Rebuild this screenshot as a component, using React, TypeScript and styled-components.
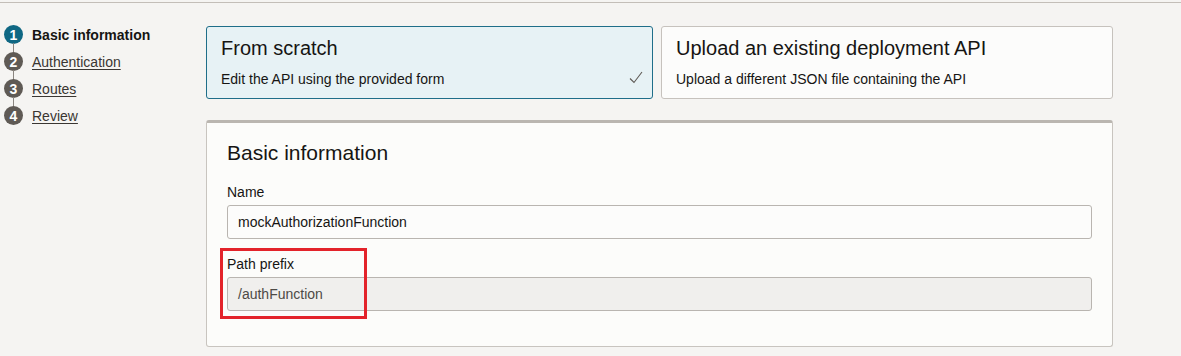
import React from "react";
import styled, { createGlobalStyle } from "styled-components";

const GlobalStyle = createGlobalStyle`
  html, body {
    margin: 0;
    padding: 0;
    background: #f5f4f2;
    font-family: "Liberation Sans", Arial, sans-serif;
    color: #161513;
  }
  * { box-sizing: border-box; }
`;

const TopRule = styled.div`
  height: 3px;
  border-bottom: 1px solid #c3beb8;
`;

const Main = styled.div`
  display: flex;
  align-items: flex-start;
`;

const Sidebar = styled.nav`
  width: 206px;
  flex: none;
  padding: 18px 0 0 4px;
  display: flex;
  flex-direction: column;
`;

const Step = styled.div<{ $last?: boolean }>`
  position: relative;
  display: flex;
  align-items: center;
  gap: 9px;
  height: 27px;
  &::after {
    content: "";
    display: ${(p) => (p.$last ? "none" : "block")};
    position: absolute;
    left: 9px;
    top: 22px;
    width: 1px;
    height: 10px;
    background: #8a8580;
  }
`;

const StepCircle = styled.span<{ $active?: boolean }>`
  width: 19px;
  height: 19px;
  border-radius: 50%;
  flex: none;
  background: ${(p) => (p.$active ? "#0f6783" : "#5f5a55")};
  color: #fff;
  font-size: 14px;
  font-weight: 700;
  display: flex;
  align-items: center;
  justify-content: center;
  line-height: 1;
`;

const StepLabel = styled.span<{ $active?: boolean }>`
  font-size: 14px;
  font-weight: ${(p) => (p.$active ? 700 : 400)};
  color: ${(p) => (p.$active ? "#161513" : "#3a3632")};
  text-decoration: ${(p) => (p.$active ? "none" : "underline")};
  text-underline-offset: 2px;
`;

const Content = styled.div`
  width: 907px;
  padding-top: 23px;
  display: flex;
  flex-direction: column;
  gap: 21px;
`;

const Cards = styled.div`
  display: grid;
  grid-template-columns: 447px 452px;
  gap: 8px;
`;

const Card = styled.div<{ $selected?: boolean }>`
  position: relative;
  height: 73px;
  padding: 10px 14px 0 14px;
  border: 1px solid ${(p) => (p.$selected ? "#1f6e89" : "#c6c2bd")};
  border-radius: 3px;
  background: ${(p) => (p.$selected ? "#e7f2f5" : "#fcfcfb")};
`;

const CardTitle = styled.div`
  font-size: 20px;
  line-height: 23px;
  color: #161513;
`;

const CardText = styled.div`
  margin-top: 11px;
  font-size: 14px;
  line-height: 16px;
  color: #161513;
`;

const Check = styled.svg`
  position: absolute;
  right: 9px;
  bottom: 14px;
`;

const Panel = styled.section`
  background: #fcfcfa;
  border: 1px solid #c8c4bf;
  border-top: 3px solid #bab6b0;
  border-radius: 3px;
  padding: 18px 20px 35px 20px;
`;

const Heading = styled.h2`
  margin: 0;
  font-size: 21px;
  font-weight: 400;
  line-height: 24px;
  color: #161513;
`;

const Field = styled.div<{ $gap: number }>`
  position: relative;
  margin-top: ${(p) => p.$gap}px;
  display: flex;
  flex-direction: column;
  gap: 5px;
`;

const Label = styled.label`
  font-size: 14px;
  line-height: 16px;
  color: #161513;
`;

const Input = styled.div<{ $disabled?: boolean }>`
  height: 34px;
  border: 1px solid #b9b5b0;
  border-radius: 3px;
  padding: 0 10px;
  display: flex;
  align-items: center;
  font-size: 14px;
  background: ${(p) => (p.$disabled ? "#f0efed" : "#fcfcfb")};
  color: ${(p) => (p.$disabled ? "#4d4a46" : "#161513")};
`;

const Highlight = styled.div`
  position: absolute;
  left: -7px;
  top: -8px;
  width: 147px;
  height: 71px;
  border: 3px solid #e3232a;
  pointer-events: none;
`;

const steps = ["Basic information", "Authentication", "Routes", "Review"];

export default function App() {
  return (
    <>
      <GlobalStyle />
      <TopRule />
      <Main>
        <Sidebar>
          {steps.map((s, i) => (
            <Step key={s} $last={i === steps.length - 1}>
              <StepCircle $active={i === 0}>{i + 1}</StepCircle>
              <StepLabel $active={i === 0}>{s}</StepLabel>
            </Step>
          ))}
        </Sidebar>
        <Content>
          <Cards>
            <Card $selected>
              <CardTitle>From scratch</CardTitle>
              <CardText>Edit the API using the provided form</CardText>
              <Check width="14" height="13" viewBox="0 0 14 13">
                <path d="M1 7.5 L5 11.5 L13 1" fill="none" stroke="#5f5a55" strokeWidth="1.1" />
              </Check>
            </Card>
            <Card>
              <CardTitle>Upload an existing deployment API</CardTitle>
              <CardText>Upload a different JSON file containing the API</CardText>
            </Card>
          </Cards>
          <Panel>
            <Heading>Basic information</Heading>
            <Field $gap={19}>
              <Label>Name</Label>
              <Input>mockAuthorizationFunction</Input>
            </Field>
            <Field $gap={17}>
              <Label>Path prefix</Label>
              <Input $disabled>/authFunction</Input>
              <Highlight />
            </Field>
          </Panel>
        </Content>
      </Main>
    </>
  );
}
